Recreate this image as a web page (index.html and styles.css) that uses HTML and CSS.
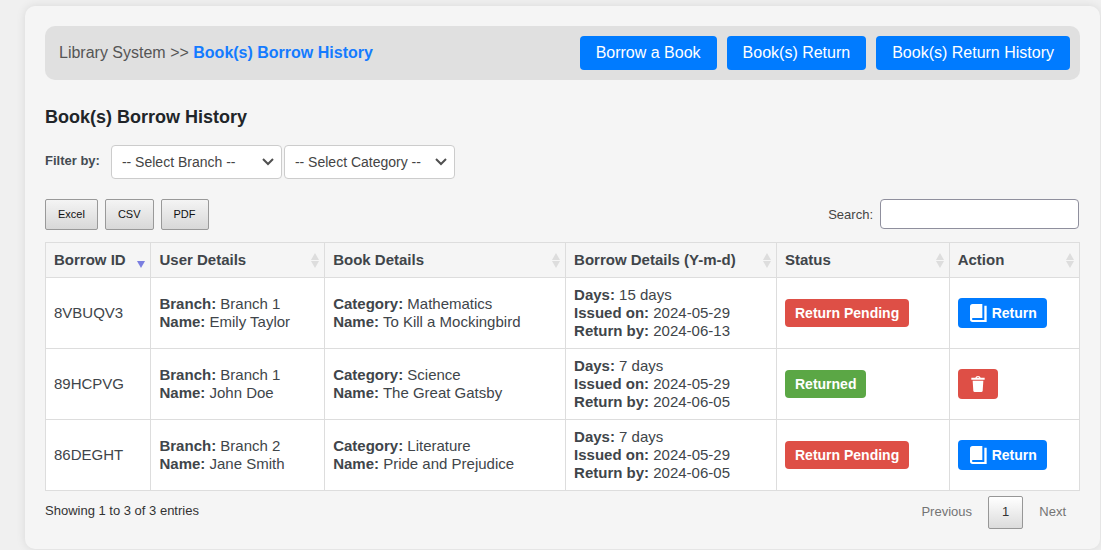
FILE: index.html
```html
<!DOCTYPE html>
<html lang="en">
<head>
<meta charset="utf-8">
<meta name="viewport" content="width=device-width, initial-scale=1">
<title>Book(s) Borrow History</title>
<link rel="stylesheet" href="styles.css">
</head>
<body>
<svg class="sprite" aria-hidden="true">
  <symbol id="sort" viewBox="0 0 8 15"><path d="M4 0 8 7H0ZM0 8H8L4 15Z"/></symbol>
  <symbol id="sort-down" viewBox="0 0 8 15"><path d="M0 8H8L4 15Z"/></symbol>
  <symbol id="book" viewBox="0 0 51 54"><path fill-rule="evenodd" d="M8 0H37V42H9C5 42 5 48 9 48H43V5H50V54H8Q0 54 0 46V8Q0 0 8 0Z"/></symbol>
  <symbol id="trash" viewBox="0 0 40 48"><path fill-rule="evenodd" d="M0 5H12Q13 0 20 0T28 5H40V11H0ZM16 5H24Q23 3 20 3T16 5ZM4 14H36L34 45Q33 48 30 48H10Q7 48 6 45Z"/></symbol>
</svg>
<main class="panel">
  <header class="topbar">
    <div class="crumbs">Library System &gt;&gt; <strong class="current">Book(s) Borrow History</strong></div>
    <nav class="links">
      <a class="link" href="#borrow">Borrow a Book</a>
      <a class="link" href="#return">Book(s) Return</a>
      <a class="link" href="#history">Book(s) Return History</a>
    </nav>
  </header>
  <h1 class="title">Book(s) Borrow History</h1>
  <div class="filters">
    <label class="filter-label" for="branch">Filter by:</label>
    <select class="select" id="branch"><option>-- Select Branch --</option><option>Branch 1</option><option>Branch 2</option></select>
    <select class="select" id="category" aria-label="Category"><option>-- Select Category --</option><option>Mathematics</option><option>Science</option><option>Literature</option></select>
  </div>
  <div class="tools">
    <div class="exports">
      <button class="export" type="button">Excel</button>
      <button class="export" type="button">CSV</button>
      <button class="export" type="button">PDF</button>
    </div>
    <div class="search">
      <label for="search">Search:</label>
      <input class="search-box" id="search" type="search">
    </div>
  </div>
  <table class="grid">
    <colgroup><col class="c-id"><col class="c-user"><col class="c-book"><col class="c-borrow"><col class="c-status"><col class="c-action"></colgroup>
    <thead>
      <tr>
        <th scope="col" aria-sort="descending"><div class="head">Borrow ID<svg class="sort active"><use href="#sort-down"/></svg></div></th>
        <th scope="col"><div class="head">User Details<svg class="sort"><use href="#sort"/></svg></div></th>
        <th scope="col"><div class="head">Book Details<svg class="sort"><use href="#sort"/></svg></div></th>
        <th scope="col"><div class="head">Borrow Details (Y-m-d)<svg class="sort"><use href="#sort"/></svg></div></th>
        <th scope="col"><div class="head">Status<svg class="sort"><use href="#sort"/></svg></div></th>
        <th scope="col"><div class="head">Action<svg class="sort"><use href="#sort"/></svg></div></th>
      </tr>
    </thead>
    <tbody>
      <tr>
        <td>8VBUQV3</td>
        <td><b>Branch:</b> Branch 1<br><b>Name:</b> Emily Taylor</td>
        <td><b>Category:</b> Mathematics<br><b>Name:</b> To Kill a Mockingbird</td>
        <td><b>Days:</b> 15 days<br><b>Issued on:</b> 2024-05-29<br><b>Return by:</b> 2024-06-13</td>
        <td><span class="badge pending">Return Pending</span></td>
        <td><button class="action return" type="button"><svg class="book"><use href="#book"/></svg>Return</button></td>
      </tr>
      <tr>
        <td>89HCPVG</td>
        <td><b>Branch:</b> Branch 1<br><b>Name:</b> John Doe</td>
        <td><b>Category:</b> Science<br><b>Name:</b> The Great Gatsby</td>
        <td><b>Days:</b> 7 days<br><b>Issued on:</b> 2024-05-29<br><b>Return by:</b> 2024-06-05</td>
        <td><span class="badge returned">Returned</span></td>
        <td><button class="action delete" type="button" aria-label="Delete"><svg class="trash"><use href="#trash"/></svg></button></td>
      </tr>
      <tr>
        <td>86DEGHT</td>
        <td><b>Branch:</b> Branch 2<br><b>Name:</b> Jane Smith</td>
        <td><b>Category:</b> Literature<br><b>Name:</b> Pride and Prejudice</td>
        <td><b>Days:</b> 7 days<br><b>Issued on:</b> 2024-05-29<br><b>Return by:</b> 2024-06-05</td>
        <td><span class="badge pending">Return Pending</span></td>
        <td><button class="action return" type="button"><svg class="book"><use href="#book"/></svg>Return</button></td>
      </tr>
    </tbody>
  </table>
  <footer class="foot">
    <div class="info">Showing 1 to 3 of 3 entries</div>
    <nav class="pager" aria-label="Pages">
      <button class="page" type="button">Previous</button>
      <button class="page on" type="button">1</button>
      <button class="page" type="button">Next</button>
    </nav>
  </footer>
</main>
</body>
</html>
```

FILE: styles.css
```css
* { box-sizing: border-box; }

body {
  margin: 0;
  padding: 6px 1px 1px 25px;
  background: #f0f0f0;
  color: #444;
  font-family: "Liberation Sans", Arial, sans-serif;
  font-size: 13px;
}

button, select, input { font-family: inherit; }

.sprite { display: none; }

.panel {
  padding: 20px;
  background: #f5f5f5;
  border-radius: 10px;
  box-shadow: 0 0 10px rgba(0, 0, 0, 0.1);
}

.topbar {
  display: flex;
  align-items: center;
  justify-content: space-between;
  padding: 10px 10px 10px 14px;
  background: #e0e0e0;
  border-radius: 10px;
  color: #555;
  font-size: 16px;
}

.crumbs { line-height: 20px; }
.current { color: #147bff; }

.links { display: flex; gap: 10px; }

.link {
  padding: 0 16px;
  background: #007bff;
  border-radius: 4px;
  color: #fff;
  line-height: 34px;
  text-decoration: none;
}

.title {
  margin: 26px 0 17px;
  color: #212529;
  font-size: 18px;
  line-height: 22px;
}

.filters { display: flex; align-items: center; gap: 2px; }

.filter-label {
  margin-right: 9px;
  padding-bottom: 3px;
  color: #444b52;
  font-weight: bold;
}

.select {
  width: 171px;
  height: 34px;
  padding: 0 10px;
  appearance: none;
  background: #fff url("data:image/svg+xml,%3Csvg xmlns='http://www.w3.org/2000/svg' width='12' height='8'%3E%3Cpath d='M1 1l5 5 5-5' fill='none' stroke='%23505050' stroke-width='2'/%3E%3C/svg%3E") no-repeat right 7px center;
  border: 1px solid #ccc;
  border-radius: 4px;
  color: #444;
  font-size: 14px;
}

.tools {
  display: flex;
  align-items: flex-start;
  justify-content: space-between;
  margin: 20px 0 12px;
}

.exports { display: flex; gap: 7px; }

.export {
  height: 31px;
  padding: 0 12px 1px;
  background: linear-gradient(#f4f4f4, #d8d8d8);
  border: 1px solid #999;
  border-radius: 2px;
  color: #111;
  font-size: 11px;
}

.search { display: flex; align-items: center; gap: 7px; padding-right: 1px; }

.search-box {
  width: 199px;
  height: 30px;
  padding: 4px;
  background: #fff;
  border: 1px solid #8f8f9d;
  border-radius: 4px;
}

.grid {
  width: 100%;
  border-collapse: collapse;
  table-layout: fixed;
  color: #40454a;
  font-size: 15px;
  line-height: 18px;
}

.c-id { width: 10.2%; }
.c-user { width: 16.8%; }
.c-book { width: 23.3%; }
.c-borrow { width: 20.4%; }
.c-status { width: 16.7%; }
.c-action { width: 12.6%; }

.grid th, .grid td { padding: 8px; border: 1px solid #ddd; text-align: left; }
.grid th { padding-right: 5px; }
.grid td { background: #fff; }

.head { display: flex; align-items: center; justify-content: space-between; white-space: nowrap; }

.sort { width: 8px; height: 15px; fill: #ddd; }
.sort.active { fill: #7a7ee0; }

.badge {
  display: inline-block;
  padding: 5px 10px;
  border-radius: 4px;
  color: #fff;
  font-size: 14px;
  font-weight: bold;
}

.pending { background: #de4f46; }
.returned { background: #5ba745; }

.action {
  display: flex;
  align-items: center;
  height: 30px;
  border: 0;
  border-radius: 4px;
  color: #fff;
  font-size: 14px;
  font-weight: bold;
}

.return { gap: 5px; padding: 0 10px 0 12px; background: #007bff; }
.delete { padding: 0 13px; background: #de4f46; }

.book { width: 17px; height: 18px; fill: #fff; }
.trash { width: 14px; height: 16px; fill: #fff; }

.foot { display: flex; justify-content: space-between; margin-top: 5px; }

.info { padding-top: 7px; color: #333; line-height: 15px; }

.pager { display: flex; gap: 2px; }

.page {
  height: 33px;
  padding: 0 13px 2px;
  background: transparent;
  border: 1px solid transparent;
  border-radius: 2px;
  color: #747474;
  font-size: 13px;
}

.page.on {
  background: linear-gradient(#fff, #dcdcdc);
  border-color: #979797;
  color: #333;
}
```
